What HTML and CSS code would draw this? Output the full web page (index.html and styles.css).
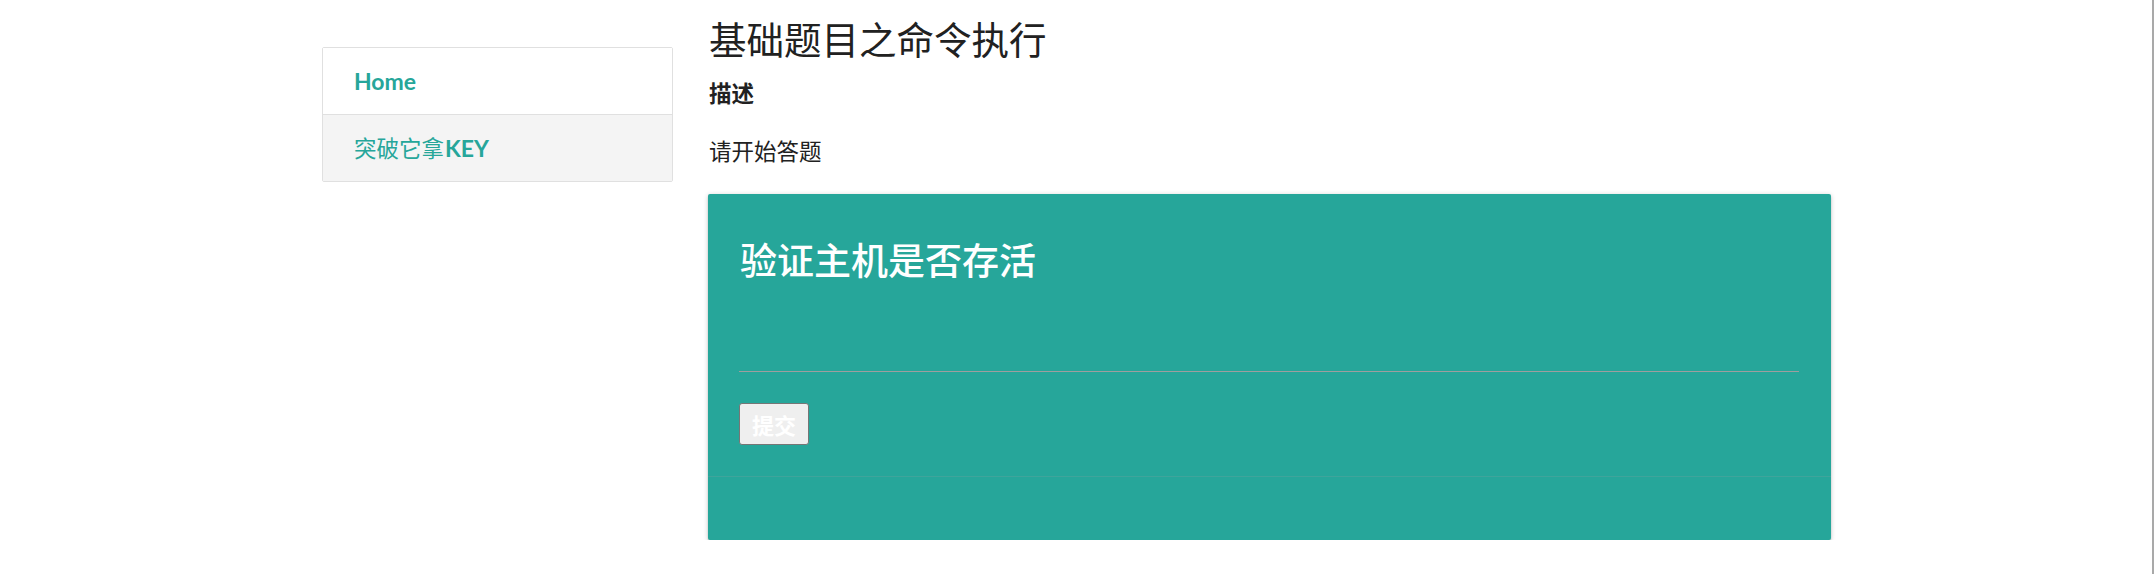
FILE: index.html
```html
<!DOCTYPE html>
<html lang="zh-CN">
<head>
<meta charset="utf-8">
<title>基础题目之命令执行</title>
<link rel="stylesheet" href="styles.css">
</head>
<body>
<div class="container">
  <nav class="sidebar">
    <a class="nav-item" href="#">Home</a>
    <a class="nav-item nav-item-alt" href="#"><span class="nav-cjk">突破它拿</span>KEY</a>
  </nav>
  <main class="main">
    <h1 class="page-title">基础题目之命令执行</h1>
    <h2 class="section-label">描述</h2>
    <p class="intro">请开始答题</p>
    <div class="card">
      <div class="card-content">
        <div class="card-title">验证主机是否存活</div>
        <input class="field" type="text" aria-label="ip">
        <button class="submit" type="button">提交</button>
      </div>
      <div class="card-action"></div>
    </div>
  </main>
</div>
</body>
</html>
```

FILE: styles.css
```css
html {
  margin: 0;
  padding: 0;
  min-height: 100%;
  border-right: 2px solid #a9a9a9;
  box-sizing: border-box;
  background: #fff;
}
body {
  margin: 0;
  font-family: Roboto, "Noto Sans CJK SC", sans-serif;
  color: rgba(0, 0, 0, 0.87);
}
.container {
  display: flex;
  align-items: flex-start;
  gap: 35px;
  padding-left: 322px;
}
.sidebar {
  width: 351px;
  box-sizing: border-box;
  margin-top: 47px;
  border: 1px solid #e0e0e0;
  border-radius: 2px;
  display: flex;
  flex-direction: column;
}
.nav-item {
  display: block;
  height: 66px;
  line-height: 66px;
  padding: 0 31px;
  font-family: Lato, "Noto Sans CJK SC", sans-serif;
  font-size: 23px;
  font-weight: 700;
  color: #26a69a;
  text-decoration: none;
  background: #fff;
}
.nav-cjk {
  font-weight: 400;
  font-size: 22.5px;
  margin-right: 1px;
}
.nav-item + .nav-item {
  border-top: 1px solid #e0e0e0;
}
.nav-item-alt {
  background: #f4f4f4;
}
.main {
  width: 1123px;
  display: flex;
  flex-direction: column;
}
.page-title {
  margin: 18px 0 0 1px;
  font-size: 37.5px;
  line-height: 46px;
  font-weight: 400;
  color: #212121;
}
.section-label {
  margin: 15px 0 0 1px;
  font-size: 22.5px;
  line-height: 30px;
  font-weight: 700;
  color: #212121;
}
.intro {
  margin: 28px 0 0 1px;
  font-size: 22.5px;
  line-height: 30px;
  color: #212121;
}
.card {
  margin-top: 27px;
  background: #26a69a;
  border-radius: 2px;
  box-shadow: 0 2px 2px 0 rgba(0,0,0,0.14), 0 3px 1px -2px rgba(0,0,0,0.12), 0 1px 5px 0 rgba(0,0,0,0.2);
}
.card-content {
  padding: 32px 32px 31px 31px;
  display: flex;
  flex-direction: column;
  align-items: flex-start;
}
.card-title {
  margin-top: 15px;
  font-size: 37px;
  line-height: 44px;
  font-weight: 500;
  color: #fff;
  padding-left: 1px;
}
.field {
  margin: 41px 0 0 0;
  width: 100%;
  height: 46px;
  box-sizing: border-box;
  border: none;
  border-bottom: 1px solid #9e9e9e;
  background: transparent;
  outline: none;
  padding: 0;
  font-size: 22.5px;
  color: #fff;
}
.submit {
  margin-top: 31px;
  width: 70px;
  height: 42px;
  padding: 0;
  border: 1px solid #767676;
  border-radius: 3px;
  background: #efefef;
  color: #fff;
  font-family: Roboto, "Noto Sans CJK SC", sans-serif;
  font-size: 22px;
  font-weight: 700;
}
.card-action {
  height: 63px;
  border-top: 1px solid rgba(160, 160, 160, 0.2);
}
```
